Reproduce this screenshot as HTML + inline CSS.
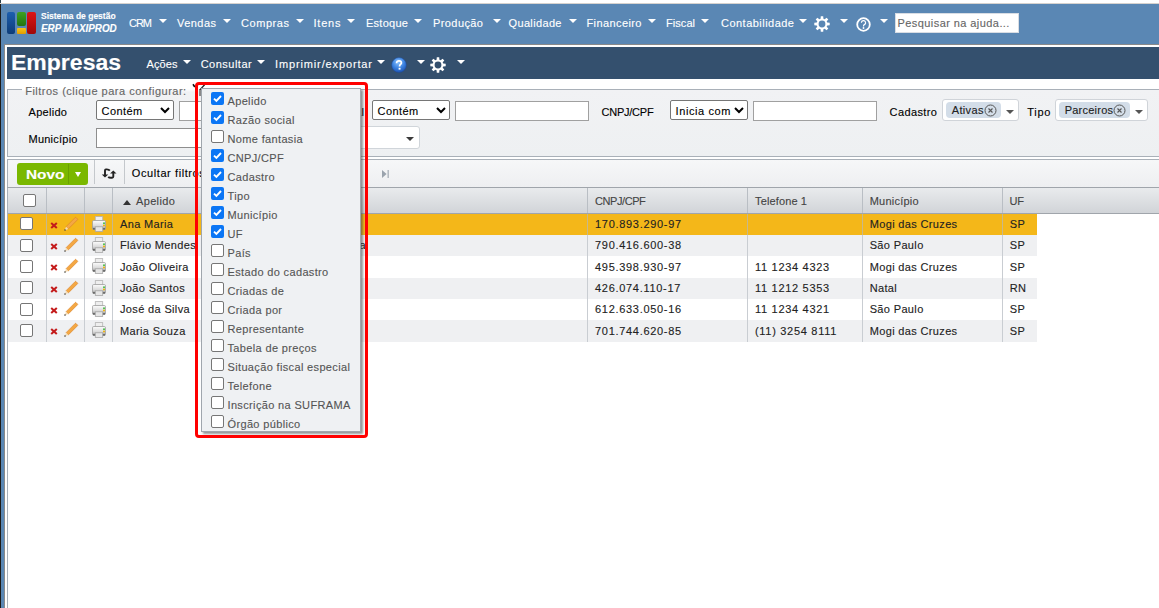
<!DOCTYPE html>
<html><head><meta charset="utf-8"><title>Empresas</title>
<style>
html,body{margin:0;padding:0;width:1159px;height:608px;overflow:hidden;background:#fff;position:relative}
body{font-family:"Liberation Sans",sans-serif;font-size:12px}
.a{position:absolute;display:block}
.t{position:absolute;white-space:nowrap;display:block;-webkit-text-stroke:0.12px currentColor}
.cb{position:absolute;display:block;width:13px;height:13px;box-sizing:border-box;border:1px solid #767676;border-radius:2px;background:#fff}
</style></head><body>
<div class="a" style="left:0px;top:0px;width:1159px;height:4px;background:#fff"></div>
<div class="a" style="left:0px;top:3px;width:1159px;height:1px;background:#d6d2ce"></div>
<div class="a" style="left:0px;top:0px;width:1px;height:3px;background:#2f4550"></div>
<div class="a" style="left:0px;top:4px;width:1px;height:604px;background:#1e1b18"></div>
<div class="a" style="left:1px;top:4px;width:1158px;height:40px;background:#5a87b4"></div>
<div class="a" style="left:1px;top:44px;width:3px;height:564px;background:#5a87b4"></div>
<div class="a" style="left:4px;top:44px;width:1155px;height:564px;background:#fff;border-left:1px solid #8a8a8a;border-top:1px solid #8a8a8a;box-sizing:border-box"></div>
<div class="a" style="left:7px;top:12px;width:8px;height:22px;background:linear-gradient(#1c5eae,#0d3c78);border-radius:2px"></div>
<div class="a" style="left:17px;top:12px;width:9px;height:14px;background:linear-gradient(#3fa020,#237510);border-radius:2px"></div>
<div class="a" style="left:17px;top:28px;width:9px;height:6px;background:linear-gradient(#f6c418,#e09c00);border-radius:1px"></div>
<div class="a" style="left:27px;top:12px;width:9px;height:22px;background:linear-gradient(#dc1414,#a00808);border-radius:2px"></div>
<span class="t" style="left:41px;top:10.55px;font-size:8.5px;line-height:10px;transform:scaleX(0.9990);transform-origin:0 0;color:#fff;font-weight:bold;">Sistema de gestão</span>
<span class="t" style="left:40.5px;top:22.64px;font-size:10px;line-height:12px;transform:scaleX(0.9849);transform-origin:0 0;color:#fff;font-weight:bold;font-style:italic;">ERP MAXIPROD</span>
<span class="t" style="left:129px;top:16.69px;font-size:11px;line-height:13px;letter-spacing:-1.016px;color:#fff;">CRM</span>
<i class="a" style="left:159px;top:19px;width:0;height:0;border-left:4.0px solid transparent;border-right:4.0px solid transparent;border-top:4px solid #fff"></i>
<span class="t" style="left:177px;top:16.69px;font-size:11px;line-height:13px;letter-spacing:0.453px;color:#fff;">Vendas</span>
<i class="a" style="left:223px;top:19px;width:0;height:0;border-left:4.0px solid transparent;border-right:4.0px solid transparent;border-top:4px solid #fff"></i>
<span class="t" style="left:241px;top:16.69px;font-size:11px;line-height:13px;letter-spacing:0.562px;color:#fff;">Compras</span>
<i class="a" style="left:296px;top:19px;width:0;height:0;border-left:4.0px solid transparent;border-right:4.0px solid transparent;border-top:4px solid #fff"></i>
<span class="t" style="left:313.5px;top:16.69px;font-size:11px;line-height:13px;letter-spacing:0.781px;color:#fff;">Itens</span>
<i class="a" style="left:347px;top:19px;width:0;height:0;border-left:4.0px solid transparent;border-right:4.0px solid transparent;border-top:4px solid #fff"></i>
<span class="t" style="left:366px;top:16.69px;font-size:11px;line-height:13px;letter-spacing:0.266px;color:#fff;">Estoque</span>
<i class="a" style="left:414px;top:19px;width:0;height:0;border-left:4.0px solid transparent;border-right:4.0px solid transparent;border-top:4px solid #fff"></i>
<span class="t" style="left:433px;top:16.69px;font-size:11px;line-height:13px;letter-spacing:0.411px;color:#fff;">Produção</span>
<i class="a" style="left:493px;top:19px;width:0;height:0;border-left:4.0px solid transparent;border-right:4.0px solid transparent;border-top:4px solid #fff"></i>
<span class="t" style="left:508.5px;top:16.69px;font-size:11px;line-height:13px;letter-spacing:0.352px;color:#fff;">Qualidade</span>
<i class="a" style="left:569px;top:19px;width:0;height:0;border-left:4.0px solid transparent;border-right:4.0px solid transparent;border-top:4px solid #fff"></i>
<span class="t" style="left:586.5px;top:16.69px;font-size:11px;line-height:13px;letter-spacing:0.403px;color:#fff;">Financeiro</span>
<i class="a" style="left:648px;top:19px;width:0;height:0;border-left:4.0px solid transparent;border-right:4.0px solid transparent;border-top:4px solid #fff"></i>
<span class="t" style="left:666px;top:16.69px;font-size:11px;line-height:13px;letter-spacing:0.056px;color:#fff;">Fiscal</span>
<i class="a" style="left:701px;top:19px;width:0;height:0;border-left:4.0px solid transparent;border-right:4.0px solid transparent;border-top:4px solid #fff"></i>
<span class="t" style="left:721px;top:16.69px;font-size:11px;line-height:13px;letter-spacing:0.474px;color:#fff;">Contabilidade</span>
<i class="a" style="left:799px;top:19px;width:0;height:0;border-left:4.0px solid transparent;border-right:4.0px solid transparent;border-top:4px solid #fff"></i>
<svg class="a" style="left:814px;top:16px" width="16" height="16" viewBox="0 0 16 16"><path fill="#fff" fill-rule="evenodd" d="M13.22 6.60 L15.70 6.78 L15.70 9.22 L13.22 9.40 L12.68 10.70 L14.31 12.58 L12.58 14.31 L10.70 12.68 L9.40 13.22 L9.22 15.70 L6.78 15.70 L6.60 13.22 L5.30 12.68 L3.42 14.31 L1.69 12.58 L3.32 10.70 L2.78 9.40 L0.30 9.22 L0.30 6.78 L2.78 6.60 L3.32 5.30 L1.69 3.42 L3.42 1.69 L5.30 3.32 L6.60 2.78 L6.78 0.30 L9.22 0.30 L9.40 2.78 L10.70 3.32 L12.58 1.69 L14.31 3.42 L12.68 5.30Z M11.40 8 A3.4 3.4 0 1 0 4.60 8 A3.4 3.4 0 1 0 11.40 8Z"/></svg>
<i class="a" style="left:840px;top:19px;width:0;height:0;border-left:4.0px solid transparent;border-right:4.0px solid transparent;border-top:4px solid #fff"></i>
<svg class="a" style="left:856px;top:17px" width="15" height="15" viewBox="0 0 15 15"><circle cx="7.5" cy="7.5" r="6.3" fill="none" stroke="#fff" stroke-width="1.8"/><path d="M5.4 5.7a2.1 2.1 0 1 1 3 1.9c-.6.3-.9.7-.9 1.3v.5" fill="none" stroke="#fff" stroke-width="1.2"/><circle cx="7.5" cy="11" r=".9" fill="#fff"/></svg>
<i class="a" style="left:880px;top:19px;width:0;height:0;border-left:4.0px solid transparent;border-right:4.0px solid transparent;border-top:4px solid #fff"></i>
<div class="a" style="left:895px;top:13px;width:124px;height:20px;background:#fff;border:1px solid #d8dde4;box-sizing:border-box"></div>
<span class="t" style="left:897.5px;top:16.79px;font-size:11px;line-height:13px;letter-spacing:0.428px;color:#666;">Pesquisar na ajuda...</span>
<div class="a" style="left:7px;top:47px;width:1152px;height:32px;background:#34506e"></div>
<span class="t" style="left:11px;top:49.55px;font-size:21.5px;line-height:26px;transform:scaleX(1.0704);transform-origin:0 0;color:#fff;font-weight:bold;">Empresas</span>
<span class="t" style="left:146.5px;top:58.29px;font-size:11px;line-height:13px;letter-spacing:0.102px;color:#fff;">Ações</span>
<i class="a" style="left:183px;top:60px;width:0;height:0;border-left:4.0px solid transparent;border-right:4.0px solid transparent;border-top:4px solid #fff"></i>
<span class="t" style="left:200.7px;top:58.29px;font-size:11px;line-height:13px;letter-spacing:0.488px;color:#fff;">Consultar</span>
<i class="a" style="left:257px;top:60px;width:0;height:0;border-left:4.0px solid transparent;border-right:4.0px solid transparent;border-top:4px solid #fff"></i>
<span class="t" style="left:275px;top:58.29px;font-size:11px;line-height:13px;letter-spacing:0.867px;color:#fff;">Imprimir/exportar</span>
<i class="a" style="left:377px;top:60px;width:0;height:0;border-left:4.0px solid transparent;border-right:4.0px solid transparent;border-top:4px solid #fff"></i>
<svg class="a" style="left:391px;top:57px" width="16" height="16" viewBox="0 0 16 16"><defs><radialGradient id="qg" cx="45%" cy="30%" r="75%"><stop offset="0" stop-color="#8cc4ff"/><stop offset=".55" stop-color="#3b82e0"/><stop offset="1" stop-color="#1b4fae"/></radialGradient></defs><circle cx="8" cy="8" r="7.4" fill="url(#qg)" stroke="#1d4a9a" stroke-width=".5"/><path d="M5.6 6.2C5.6 4.6 6.6 3.8 8 3.8S10.4 4.6 10.4 5.9C10.4 7.3 8.6 7.5 8.6 9V9.6" fill="none" stroke="#fff" stroke-width="1.7"/><rect x="7.6" y="10.8" width="1.9" height="1.8" fill="#fff"/></svg>
<i class="a" style="left:417px;top:60px;width:0;height:0;border-left:4.0px solid transparent;border-right:4.0px solid transparent;border-top:4px solid #fff"></i>
<svg class="a" style="left:430px;top:57px" width="16" height="16" viewBox="0 0 16 16"><path fill="#fff" fill-rule="evenodd" d="M13.22 6.60 L15.70 6.78 L15.70 9.22 L13.22 9.40 L12.68 10.70 L14.31 12.58 L12.58 14.31 L10.70 12.68 L9.40 13.22 L9.22 15.70 L6.78 15.70 L6.60 13.22 L5.30 12.68 L3.42 14.31 L1.69 12.58 L3.32 10.70 L2.78 9.40 L0.30 9.22 L0.30 6.78 L2.78 6.60 L3.32 5.30 L1.69 3.42 L3.42 1.69 L5.30 3.32 L6.60 2.78 L6.78 0.30 L9.22 0.30 L9.40 2.78 L10.70 3.32 L12.58 1.69 L14.31 3.42 L12.68 5.30Z M11.40 8 A3.4 3.4 0 1 0 4.60 8 A3.4 3.4 0 1 0 11.40 8Z"/></svg>
<i class="a" style="left:457px;top:60px;width:0;height:0;border-left:4.0px solid transparent;border-right:4.0px solid transparent;border-top:4px solid #fff"></i>
<div class="a" style="left:7px;top:89px;width:1152px;height:68px;background:linear-gradient(#f1f2f4,#eef0f2);border:1px solid #a9b0b8;border-right:none;box-sizing:border-box"></div>
<div class="a" style="left:22px;top:86px;width:195px;height:6px;background:#fff"></div>
<div class="a" style="left:22px;top:89px;width:195px;height:3px;background:linear-gradient(#fff,#f1f2f4)"></div>
<span class="t" style="left:25.2px;top:85.19px;font-size:11px;line-height:13px;letter-spacing:0.498px;color:#666;">Filtros (clique para configurar:</span>
<svg class="a" style="left:190px;top:82px" width="20" height="16" viewBox="0 0 20 16"><path d="M3 2.2L4.8 5" stroke="#111" stroke-width="1.6"/><path d="M9.4 8.4L14.6 2.8" stroke="#222" stroke-width="1.3"/><rect x="9" y="8" width="2" height="6" fill="#8a8a8a"/></svg>
<span class="t" style="left:28.5px;top:106.39px;font-size:11px;line-height:13px;letter-spacing:0.297px;color:#000;">Apelido</span>
<div class="a" style="left:96px;top:100px;width:78px;height:20px;background:#fff;border:1px solid #767676;border-radius:2px;box-sizing:border-box"></div><span class="t" style="left:101.5px;top:105.39px;font-size:11px;line-height:13px;letter-spacing:0.434px;color:#000;">Contém</span><svg class="a" style="left:160px;top:107px" width="10" height="7" viewBox="0 0 10 7"><path d="M1 1l4 4 4-4" fill="none" stroke="#000" stroke-width="2"/></svg>
<div class="a" style="left:179px;top:101px;width:140px;height:20px;background:#fff;border:1px solid #a0a0a0;box-sizing:border-box"></div>
<span class="t" style="left:297px;top:106.39px;font-size:11px;line-height:13px;letter-spacing:0.364px;color:#000;">Razão social</span>
<div class="a" style="left:372px;top:100px;width:78px;height:20px;background:#fff;border:1px solid #767676;border-radius:2px;box-sizing:border-box"></div><span class="t" style="left:377.5px;top:105.39px;font-size:11px;line-height:13px;letter-spacing:0.434px;color:#000;">Contém</span><svg class="a" style="left:436px;top:107px" width="10" height="7" viewBox="0 0 10 7"><path d="M1 1l4 4 4-4" fill="none" stroke="#000" stroke-width="2"/></svg>
<div class="a" style="left:455px;top:101px;width:134px;height:20px;background:#fff;border:1px solid #a0a0a0;box-sizing:border-box"></div>
<span class="t" style="left:601.6px;top:106.39px;font-size:11px;line-height:13px;letter-spacing:-0.254px;color:#000;">CNPJ/CPF</span>
<div class="a" style="left:670px;top:100px;width:78px;height:20px;background:#fff;border:1px solid #767676;border-radius:2px;box-sizing:border-box"></div><span class="t" style="left:675.5px;top:105.39px;font-size:11px;line-height:13px;letter-spacing:0.608px;color:#000;">Inicia com</span><svg class="a" style="left:734px;top:107px" width="10" height="7" viewBox="0 0 10 7"><path d="M1 1l4 4 4-4" fill="none" stroke="#000" stroke-width="2"/></svg>
<div class="a" style="left:753px;top:101px;width:124px;height:20px;background:#fff;border:1px solid #a0a0a0;box-sizing:border-box"></div>
<span class="t" style="left:889.6px;top:105.89px;font-size:11px;line-height:13px;letter-spacing:0.392px;color:#000;">Cadastro</span>
<div class="a" style="left:942px;top:99px;width:77px;height:22px;background:#fff;border:1px solid #d0d4d9;border-radius:3px;box-sizing:border-box"></div><div class="a" style="left:946px;top:102px;width:55px;height:16px;background:#d3dde8;border-radius:4px"></div><span class="t" style="left:951.7px;top:104.19px;font-size:11px;line-height:13px;letter-spacing:0.366px;color:#222;">Ativas</span><svg class="a" style="left:984px;top:104px" width="13" height="13" viewBox="0 0 13 13"><circle cx="6.5" cy="6.5" r="5.5" fill="none" stroke="#555" stroke-width="1"/><path d="M4.5 4.5l4 4M8.5 4.5l-4 4" stroke="#555" stroke-width="1.1"/></svg><i class="a" style="left:1006px;top:110px;width:0;height:0;border-left:4.0px solid transparent;border-right:4.0px solid transparent;border-top:4px solid #555"></i>
<span class="t" style="left:1027.3px;top:105.89px;font-size:11px;line-height:13px;letter-spacing:0.667px;color:#000;">Tipo</span>
<div class="a" style="left:1055px;top:99px;width:93px;height:22px;background:#fff;border:1px solid #d0d4d9;border-radius:3px;box-sizing:border-box"></div><div class="a" style="left:1059px;top:102px;width:70.5px;height:16px;background:#d3dde8;border-radius:4px"></div><span class="t" style="left:1064.7px;top:104.19px;font-size:11px;line-height:13px;letter-spacing:0.229px;color:#222;">Parceiros</span><svg class="a" style="left:1112.5px;top:104px" width="13" height="13" viewBox="0 0 13 13"><circle cx="6.5" cy="6.5" r="5.5" fill="none" stroke="#555" stroke-width="1"/><path d="M4.5 4.5l4 4M8.5 4.5l-4 4" stroke="#555" stroke-width="1.1"/></svg><i class="a" style="left:1135px;top:110px;width:0;height:0;border-left:4.0px solid transparent;border-right:4.0px solid transparent;border-top:4px solid #555"></i>
<span class="t" style="left:28.5px;top:132.89px;font-size:11px;line-height:13px;letter-spacing:0.238px;color:#000;">Município</span>
<div class="a" style="left:205px;top:126px;width:215px;height:23px;background:#fff;border:1px solid #d0d5da;border-radius:3px;box-sizing:border-box"></div>
<div class="a" style="left:96px;top:128px;width:110px;height:20px;background:#fff;border:1px solid #8e8e8e;box-sizing:border-box"></div>
<i class="a" style="left:406px;top:137px;width:0;height:0;border-left:4.0px solid transparent;border-right:4.0px solid transparent;border-top:4px solid #3a3a3a"></i>
<div class="a" style="left:7px;top:159px;width:1152px;height:29px;background:linear-gradient(#f6f7f8,#eeeff1);border:1px solid #a9b0b8;border-right:none;border-bottom-color:#b8bdc3;box-sizing:border-box"></div>
<div class="a" style="left:17px;top:163px;width:71px;height:22px;background:#7ab800;border-radius:3px"></div>
<div class="a" style="left:68px;top:164px;width:1px;height:20px;background:#6aa000"></div>
<span class="t" style="left:25.5px;top:167.00px;font-size:13px;line-height:16px;transform:scaleX(1.1846);transform-origin:0 0;color:#fff;font-weight:bold;">Novo</span>
<i class="a" style="left:74.5px;top:171.5px;width:0;height:0;border-left:3.5px solid transparent;border-right:3.5px solid transparent;border-top:5px solid #fff"></i>
<div class="a" style="left:94px;top:160px;width:1px;height:24px;background:#c4c8cc"></div>
<svg class="a" style="left:100px;top:167px" width="18" height="13" viewBox="0 0 18 13"><path d="M9.8 3.6C9.2 2.8 8.2 2.4 6.8 2.4H5.9C5.3 2.4 5 2.8 5 3.4V8" fill="none" stroke="#222" stroke-width="1.9"/><path d="M1.8 7.4H8.2L5 10.6z" fill="#222"/><path d="M13.3 6V9.6C13.3 10.4 12.9 10.8 12.1 10.8H10.8C9.6 10.8 8.8 10.5 8.3 9.7" fill="none" stroke="#222" stroke-width="1.9"/><path d="M10.1 6.6H16.5L13.3 3.4z" fill="#222"/></svg>
<div class="a" style="left:124px;top:160px;width:1px;height:24px;background:#c4c8cc"></div>
<span class="t" style="left:131.8px;top:167.49px;font-size:11px;line-height:13px;letter-spacing:0.585px;color:#000;">Ocultar filtros</span>
<svg class="a" style="left:382px;top:170px" width="7" height="8" viewBox="0 0 7 8"><path d="M0 0l4.6 4-4.6 4z" fill="#9aa3ad"/><rect x="5.6" y="0" width="1.1" height="8" fill="#9aa3ad"/></svg>
<div class="a" style="left:7px;top:187px;width:1152px;height:27px;background:linear-gradient(#e9ebed,#d1d4d8);border-top:1px solid #a0a5ab;border-bottom:1px solid #a0a5ab;box-sizing:border-box"></div>
<div class="a" style="left:46px;top:188px;width:1px;height:25px;background:#b9bec4"></div>
<div class="a" style="left:84px;top:188px;width:1px;height:25px;background:#b9bec4"></div>
<div class="a" style="left:112px;top:188px;width:1px;height:25px;background:#b9bec4"></div>
<div class="a" style="left:587px;top:188px;width:1px;height:25px;background:#b9bec4"></div>
<div class="a" style="left:747px;top:188px;width:1px;height:25px;background:#b9bec4"></div>
<div class="a" style="left:862px;top:188px;width:1px;height:25px;background:#b9bec4"></div>
<div class="a" style="left:1002px;top:188px;width:1px;height:25px;background:#b9bec4"></div>
<i class="cb" style="left:23px;top:194px"></i>
<i class="a" style="left:122.5px;top:200px;width:0;height:0;border-left:4.5px solid transparent;border-right:4.5px solid transparent;border-bottom:5px solid #333"></i>
<span class="t" style="left:136px;top:194.69px;font-size:11px;line-height:13px;letter-spacing:0.347px;color:#444;">Apelido</span>
<span class="t" style="left:595px;top:194.69px;font-size:11px;line-height:13px;letter-spacing:-0.426px;color:#444;">CNPJ/CPF</span>
<span class="t" style="left:755px;top:194.69px;font-size:11px;line-height:13px;letter-spacing:0.132px;color:#444;">Telefone 1</span>
<span class="t" style="left:869.7px;top:194.69px;font-size:11px;line-height:13px;letter-spacing:0.238px;color:#444;">Município</span>
<span class="t" style="left:1009.5px;top:194.69px;font-size:11px;line-height:13px;letter-spacing:-0.156px;color:#444;">UF</span>
<div class="a" style="left:7px;top:213.7px;width:1030px;height:21.35px;background:#f4b719"></div>
<div class="a" style="left:46px;top:213.7px;width:1px;height:21.35px;background:#c8b88a"></div>
<div class="a" style="left:84px;top:213.7px;width:1px;height:21.35px;background:#c8b88a"></div>
<div class="a" style="left:112px;top:213.7px;width:1px;height:21.35px;background:#c8b88a"></div>
<div class="a" style="left:587px;top:213.7px;width:1px;height:21.35px;background:#c8b88a"></div>
<div class="a" style="left:747px;top:213.7px;width:1px;height:21.35px;background:#c8b88a"></div>
<div class="a" style="left:862px;top:213.7px;width:1px;height:21.35px;background:#c8b88a"></div>
<div class="a" style="left:1002px;top:213.7px;width:1px;height:21.35px;background:#c8b88a"></div>
<i class="cb" style="left:20px;top:217.2px"></i>
<svg class="a" style="left:50px;top:222px" width="8" height="7" viewBox="0 0 8 7"><path d="M1.2 .9l5.6 5.2M6.8 .9L1.2 6.1" stroke="#c41c1c" stroke-width="2"/></svg>
<svg class="a" style="left:60px;top:215px" width="20" height="20" viewBox="0 0 20 20"><g transform="translate(4.3 15.7) rotate(-45)"><rect x="4" y="-1.6" width="13.6" height="3.2" rx=".5" fill="#f4a843" stroke="#d9822a" stroke-width=".6"/><path d="M.4 0L4.1-1.6V1.6z" fill="#f5dcb4"/><circle cx="1" cy="0" r=".75" fill="#333"/></g></svg>
<svg class="a" style="left:92px;top:215.7px" width="14" height="16" viewBox="0 0 14 16"><defs><linearGradient id="pg0" x1="0" y1="0" x2="0" y2="1"><stop offset="0" stop-color="#fdfdfd"/><stop offset=".6" stop-color="#d9d9d9"/><stop offset="1" stop-color="#8a8a8a"/></linearGradient></defs><rect x="3.3" y="0.6" width="7.4" height="4.4" fill="#eeeeee" stroke="#b4b4b4" stroke-width=".8"/><rect x="0.5" y="4.5" width="13" height="9" rx="1.2" fill="url(#pg0)" stroke="#a0a0a0" stroke-width=".8"/><rect x="1" y="12" width="12" height="1.6" fill="#6a6a6a"/><rect x="3.3" y="10.8" width="7.4" height="4.6" fill="#e6e6e6" stroke="#a8a8a8" stroke-width=".8"/><circle cx="12" cy="7.2" r="1" fill="#44c044"/><circle cx="12" cy="9.6" r="1" fill="#f0b000"/></svg>
<span class="t" style="left:120px;top:218.09px;font-size:11px;line-height:13px;letter-spacing:0.35px;color:#222;">Ana Maria</span>
<span class="t" style="left:595px;top:218.09px;font-size:11px;line-height:13px;letter-spacing:0.7px;color:#222;">170.893.290-97</span>
<span class="t" style="left:869.7px;top:218.09px;font-size:11px;line-height:13px;letter-spacing:0.35px;color:#222;">Mogi das Cruzes</span>
<span class="t" style="left:1009.8px;top:218.09px;font-size:11px;line-height:13px;letter-spacing:0.35px;color:#222;">SP</span>
<div class="a" style="left:7px;top:235.04999999999998px;width:1030px;height:21.35px;background:#eff0f2"></div>
<div class="a" style="left:46px;top:235.04999999999998px;width:1px;height:21.35px;background:#c9cdd2"></div>
<div class="a" style="left:84px;top:235.04999999999998px;width:1px;height:21.35px;background:#c9cdd2"></div>
<div class="a" style="left:112px;top:235.04999999999998px;width:1px;height:21.35px;background:#c9cdd2"></div>
<div class="a" style="left:587px;top:235.04999999999998px;width:1px;height:21.35px;background:#c9cdd2"></div>
<div class="a" style="left:747px;top:235.04999999999998px;width:1px;height:21.35px;background:#c9cdd2"></div>
<div class="a" style="left:862px;top:235.04999999999998px;width:1px;height:21.35px;background:#c9cdd2"></div>
<div class="a" style="left:1002px;top:235.04999999999998px;width:1px;height:21.35px;background:#c9cdd2"></div>
<i class="cb" style="left:20px;top:238.54999999999998px"></i>
<svg class="a" style="left:50px;top:243px" width="8" height="7" viewBox="0 0 8 7"><path d="M1.2 .9l5.6 5.2M6.8 .9L1.2 6.1" stroke="#c41c1c" stroke-width="2"/></svg>
<svg class="a" style="left:60px;top:236px" width="20" height="20" viewBox="0 0 20 20"><g transform="translate(4.3 15.7) rotate(-45)"><rect x="4" y="-1.6" width="13.6" height="3.2" rx=".5" fill="#f4a843" stroke="#d9822a" stroke-width=".6"/><path d="M.4 0L4.1-1.6V1.6z" fill="#f5dcb4"/><circle cx="1" cy="0" r=".75" fill="#333"/></g></svg>
<svg class="a" style="left:92px;top:237.04999999999998px" width="14" height="16" viewBox="0 0 14 16"><defs><linearGradient id="pg1" x1="0" y1="0" x2="0" y2="1"><stop offset="0" stop-color="#fdfdfd"/><stop offset=".6" stop-color="#d9d9d9"/><stop offset="1" stop-color="#8a8a8a"/></linearGradient></defs><rect x="3.3" y="0.6" width="7.4" height="4.4" fill="#eeeeee" stroke="#b4b4b4" stroke-width=".8"/><rect x="0.5" y="4.5" width="13" height="9" rx="1.2" fill="url(#pg1)" stroke="#a0a0a0" stroke-width=".8"/><rect x="1" y="12" width="12" height="1.6" fill="#6a6a6a"/><rect x="3.3" y="10.8" width="7.4" height="4.6" fill="#e6e6e6" stroke="#a8a8a8" stroke-width=".8"/><circle cx="12" cy="7.2" r="1" fill="#44c044"/><circle cx="12" cy="9.6" r="1" fill="#f0b000"/></svg>
<span class="t" style="left:120px;top:239.44px;font-size:11px;line-height:13px;letter-spacing:0.35px;color:#222;">Flávio Mendes</span>
<span class="t" style="left:595px;top:239.44px;font-size:11px;line-height:13px;letter-spacing:0.7px;color:#222;">790.416.600-38</span>
<span class="t" style="left:869.7px;top:239.44px;font-size:11px;line-height:13px;letter-spacing:0.35px;color:#222;">São Paulo</span>
<span class="t" style="left:1009.8px;top:239.44px;font-size:11px;line-height:13px;letter-spacing:0.35px;color:#222;">SP</span>
<div class="a" style="left:7px;top:256.4px;width:1030px;height:21.35px;background:#fff"></div>
<div class="a" style="left:46px;top:256.4px;width:1px;height:21.35px;background:#c9cdd2"></div>
<div class="a" style="left:84px;top:256.4px;width:1px;height:21.35px;background:#c9cdd2"></div>
<div class="a" style="left:112px;top:256.4px;width:1px;height:21.35px;background:#c9cdd2"></div>
<div class="a" style="left:587px;top:256.4px;width:1px;height:21.35px;background:#c9cdd2"></div>
<div class="a" style="left:747px;top:256.4px;width:1px;height:21.35px;background:#c9cdd2"></div>
<div class="a" style="left:862px;top:256.4px;width:1px;height:21.35px;background:#c9cdd2"></div>
<div class="a" style="left:1002px;top:256.4px;width:1px;height:21.35px;background:#c9cdd2"></div>
<i class="cb" style="left:20px;top:259.9px"></i>
<svg class="a" style="left:50px;top:264px" width="8" height="7" viewBox="0 0 8 7"><path d="M1.2 .9l5.6 5.2M6.8 .9L1.2 6.1" stroke="#c41c1c" stroke-width="2"/></svg>
<svg class="a" style="left:60px;top:257px" width="20" height="20" viewBox="0 0 20 20"><g transform="translate(4.3 15.7) rotate(-45)"><rect x="4" y="-1.6" width="13.6" height="3.2" rx=".5" fill="#f4a843" stroke="#d9822a" stroke-width=".6"/><path d="M.4 0L4.1-1.6V1.6z" fill="#f5dcb4"/><circle cx="1" cy="0" r=".75" fill="#333"/></g></svg>
<svg class="a" style="left:92px;top:258.4px" width="14" height="16" viewBox="0 0 14 16"><defs><linearGradient id="pg2" x1="0" y1="0" x2="0" y2="1"><stop offset="0" stop-color="#fdfdfd"/><stop offset=".6" stop-color="#d9d9d9"/><stop offset="1" stop-color="#8a8a8a"/></linearGradient></defs><rect x="3.3" y="0.6" width="7.4" height="4.4" fill="#eeeeee" stroke="#b4b4b4" stroke-width=".8"/><rect x="0.5" y="4.5" width="13" height="9" rx="1.2" fill="url(#pg2)" stroke="#a0a0a0" stroke-width=".8"/><rect x="1" y="12" width="12" height="1.6" fill="#6a6a6a"/><rect x="3.3" y="10.8" width="7.4" height="4.6" fill="#e6e6e6" stroke="#a8a8a8" stroke-width=".8"/><circle cx="12" cy="7.2" r="1" fill="#44c044"/><circle cx="12" cy="9.6" r="1" fill="#f0b000"/></svg>
<span class="t" style="left:120px;top:260.79px;font-size:11px;line-height:13px;letter-spacing:0.35px;color:#222;">João Oliveira</span>
<span class="t" style="left:595px;top:260.79px;font-size:11px;line-height:13px;letter-spacing:0.7px;color:#222;">495.398.930-97</span>
<span class="t" style="left:755px;top:260.79px;font-size:11px;line-height:13px;letter-spacing:0.7px;color:#222;">11 1234 4323</span>
<span class="t" style="left:869.7px;top:260.79px;font-size:11px;line-height:13px;letter-spacing:0.35px;color:#222;">Mogi das Cruzes</span>
<span class="t" style="left:1009.8px;top:260.79px;font-size:11px;line-height:13px;letter-spacing:0.35px;color:#222;">SP</span>
<div class="a" style="left:7px;top:277.75px;width:1030px;height:21.35px;background:#eff0f2"></div>
<div class="a" style="left:46px;top:277.75px;width:1px;height:21.35px;background:#c9cdd2"></div>
<div class="a" style="left:84px;top:277.75px;width:1px;height:21.35px;background:#c9cdd2"></div>
<div class="a" style="left:112px;top:277.75px;width:1px;height:21.35px;background:#c9cdd2"></div>
<div class="a" style="left:587px;top:277.75px;width:1px;height:21.35px;background:#c9cdd2"></div>
<div class="a" style="left:747px;top:277.75px;width:1px;height:21.35px;background:#c9cdd2"></div>
<div class="a" style="left:862px;top:277.75px;width:1px;height:21.35px;background:#c9cdd2"></div>
<div class="a" style="left:1002px;top:277.75px;width:1px;height:21.35px;background:#c9cdd2"></div>
<i class="cb" style="left:20px;top:281.25px"></i>
<svg class="a" style="left:50px;top:286px" width="8" height="7" viewBox="0 0 8 7"><path d="M1.2 .9l5.6 5.2M6.8 .9L1.2 6.1" stroke="#c41c1c" stroke-width="2"/></svg>
<svg class="a" style="left:60px;top:279px" width="20" height="20" viewBox="0 0 20 20"><g transform="translate(4.3 15.7) rotate(-45)"><rect x="4" y="-1.6" width="13.6" height="3.2" rx=".5" fill="#f4a843" stroke="#d9822a" stroke-width=".6"/><path d="M.4 0L4.1-1.6V1.6z" fill="#f5dcb4"/><circle cx="1" cy="0" r=".75" fill="#333"/></g></svg>
<svg class="a" style="left:92px;top:279.75px" width="14" height="16" viewBox="0 0 14 16"><defs><linearGradient id="pg3" x1="0" y1="0" x2="0" y2="1"><stop offset="0" stop-color="#fdfdfd"/><stop offset=".6" stop-color="#d9d9d9"/><stop offset="1" stop-color="#8a8a8a"/></linearGradient></defs><rect x="3.3" y="0.6" width="7.4" height="4.4" fill="#eeeeee" stroke="#b4b4b4" stroke-width=".8"/><rect x="0.5" y="4.5" width="13" height="9" rx="1.2" fill="url(#pg3)" stroke="#a0a0a0" stroke-width=".8"/><rect x="1" y="12" width="12" height="1.6" fill="#6a6a6a"/><rect x="3.3" y="10.8" width="7.4" height="4.6" fill="#e6e6e6" stroke="#a8a8a8" stroke-width=".8"/><circle cx="12" cy="7.2" r="1" fill="#44c044"/><circle cx="12" cy="9.6" r="1" fill="#f0b000"/></svg>
<span class="t" style="left:120px;top:282.14px;font-size:11px;line-height:13px;letter-spacing:0.35px;color:#222;">João Santos</span>
<span class="t" style="left:595px;top:282.14px;font-size:11px;line-height:13px;letter-spacing:0.7px;color:#222;">426.074.110-17</span>
<span class="t" style="left:755px;top:282.14px;font-size:11px;line-height:13px;letter-spacing:0.7px;color:#222;">11 1212 5353</span>
<span class="t" style="left:869.7px;top:282.14px;font-size:11px;line-height:13px;letter-spacing:0.35px;color:#222;">Natal</span>
<span class="t" style="left:1009.8px;top:282.14px;font-size:11px;line-height:13px;letter-spacing:0.35px;color:#222;">RN</span>
<div class="a" style="left:7px;top:299.1px;width:1030px;height:21.35px;background:#fff"></div>
<div class="a" style="left:46px;top:299.1px;width:1px;height:21.35px;background:#c9cdd2"></div>
<div class="a" style="left:84px;top:299.1px;width:1px;height:21.35px;background:#c9cdd2"></div>
<div class="a" style="left:112px;top:299.1px;width:1px;height:21.35px;background:#c9cdd2"></div>
<div class="a" style="left:587px;top:299.1px;width:1px;height:21.35px;background:#c9cdd2"></div>
<div class="a" style="left:747px;top:299.1px;width:1px;height:21.35px;background:#c9cdd2"></div>
<div class="a" style="left:862px;top:299.1px;width:1px;height:21.35px;background:#c9cdd2"></div>
<div class="a" style="left:1002px;top:299.1px;width:1px;height:21.35px;background:#c9cdd2"></div>
<i class="cb" style="left:20px;top:302.6px"></i>
<svg class="a" style="left:50px;top:307px" width="8" height="7" viewBox="0 0 8 7"><path d="M1.2 .9l5.6 5.2M6.8 .9L1.2 6.1" stroke="#c41c1c" stroke-width="2"/></svg>
<svg class="a" style="left:60px;top:300px" width="20" height="20" viewBox="0 0 20 20"><g transform="translate(4.3 15.7) rotate(-45)"><rect x="4" y="-1.6" width="13.6" height="3.2" rx=".5" fill="#f4a843" stroke="#d9822a" stroke-width=".6"/><path d="M.4 0L4.1-1.6V1.6z" fill="#f5dcb4"/><circle cx="1" cy="0" r=".75" fill="#333"/></g></svg>
<svg class="a" style="left:92px;top:301.1px" width="14" height="16" viewBox="0 0 14 16"><defs><linearGradient id="pg4" x1="0" y1="0" x2="0" y2="1"><stop offset="0" stop-color="#fdfdfd"/><stop offset=".6" stop-color="#d9d9d9"/><stop offset="1" stop-color="#8a8a8a"/></linearGradient></defs><rect x="3.3" y="0.6" width="7.4" height="4.4" fill="#eeeeee" stroke="#b4b4b4" stroke-width=".8"/><rect x="0.5" y="4.5" width="13" height="9" rx="1.2" fill="url(#pg4)" stroke="#a0a0a0" stroke-width=".8"/><rect x="1" y="12" width="12" height="1.6" fill="#6a6a6a"/><rect x="3.3" y="10.8" width="7.4" height="4.6" fill="#e6e6e6" stroke="#a8a8a8" stroke-width=".8"/><circle cx="12" cy="7.2" r="1" fill="#44c044"/><circle cx="12" cy="9.6" r="1" fill="#f0b000"/></svg>
<span class="t" style="left:120px;top:303.49px;font-size:11px;line-height:13px;letter-spacing:0.35px;color:#222;">José da Silva</span>
<span class="t" style="left:595px;top:303.49px;font-size:11px;line-height:13px;letter-spacing:0.7px;color:#222;">612.633.050-16</span>
<span class="t" style="left:755px;top:303.49px;font-size:11px;line-height:13px;letter-spacing:0.7px;color:#222;">11 1234 4321</span>
<span class="t" style="left:869.7px;top:303.49px;font-size:11px;line-height:13px;letter-spacing:0.35px;color:#222;">São Paulo</span>
<span class="t" style="left:1009.8px;top:303.49px;font-size:11px;line-height:13px;letter-spacing:0.35px;color:#222;">SP</span>
<div class="a" style="left:7px;top:320.45px;width:1030px;height:21.35px;background:#eff0f2"></div>
<div class="a" style="left:46px;top:320.45px;width:1px;height:21.35px;background:#c9cdd2"></div>
<div class="a" style="left:84px;top:320.45px;width:1px;height:21.35px;background:#c9cdd2"></div>
<div class="a" style="left:112px;top:320.45px;width:1px;height:21.35px;background:#c9cdd2"></div>
<div class="a" style="left:587px;top:320.45px;width:1px;height:21.35px;background:#c9cdd2"></div>
<div class="a" style="left:747px;top:320.45px;width:1px;height:21.35px;background:#c9cdd2"></div>
<div class="a" style="left:862px;top:320.45px;width:1px;height:21.35px;background:#c9cdd2"></div>
<div class="a" style="left:1002px;top:320.45px;width:1px;height:21.35px;background:#c9cdd2"></div>
<i class="cb" style="left:20px;top:323.95px"></i>
<svg class="a" style="left:50px;top:328px" width="8" height="7" viewBox="0 0 8 7"><path d="M1.2 .9l5.6 5.2M6.8 .9L1.2 6.1" stroke="#c41c1c" stroke-width="2"/></svg>
<svg class="a" style="left:60px;top:321px" width="20" height="20" viewBox="0 0 20 20"><g transform="translate(4.3 15.7) rotate(-45)"><rect x="4" y="-1.6" width="13.6" height="3.2" rx=".5" fill="#f4a843" stroke="#d9822a" stroke-width=".6"/><path d="M.4 0L4.1-1.6V1.6z" fill="#f5dcb4"/><circle cx="1" cy="0" r=".75" fill="#333"/></g></svg>
<svg class="a" style="left:92px;top:322.45px" width="14" height="16" viewBox="0 0 14 16"><defs><linearGradient id="pg5" x1="0" y1="0" x2="0" y2="1"><stop offset="0" stop-color="#fdfdfd"/><stop offset=".6" stop-color="#d9d9d9"/><stop offset="1" stop-color="#8a8a8a"/></linearGradient></defs><rect x="3.3" y="0.6" width="7.4" height="4.4" fill="#eeeeee" stroke="#b4b4b4" stroke-width=".8"/><rect x="0.5" y="4.5" width="13" height="9" rx="1.2" fill="url(#pg5)" stroke="#a0a0a0" stroke-width=".8"/><rect x="1" y="12" width="12" height="1.6" fill="#6a6a6a"/><rect x="3.3" y="10.8" width="7.4" height="4.6" fill="#e6e6e6" stroke="#a8a8a8" stroke-width=".8"/><circle cx="12" cy="7.2" r="1" fill="#44c044"/><circle cx="12" cy="9.6" r="1" fill="#f0b000"/></svg>
<span class="t" style="left:120px;top:324.84px;font-size:11px;line-height:13px;letter-spacing:0.35px;color:#222;">Maria Souza</span>
<span class="t" style="left:595px;top:324.84px;font-size:11px;line-height:13px;letter-spacing:0.7px;color:#222;">701.744.620-85</span>
<span class="t" style="left:755px;top:324.84px;font-size:11px;line-height:13px;letter-spacing:0.7px;color:#222;">(11) 3254 8111</span>
<span class="t" style="left:869.7px;top:324.84px;font-size:11px;line-height:13px;letter-spacing:0.35px;color:#222;">Mogi das Cruzes</span>
<span class="t" style="left:1009.8px;top:324.84px;font-size:11px;line-height:13px;letter-spacing:0.35px;color:#222;">SP</span>
<div class="a" style="left:7px;top:188px;width:1px;height:420px;background:#a9b1ba"></div>
<span class="t" style="left:359.5px;top:239.44px;font-size:11px;line-height:13px;letter-spacing:0.35px;color:#222;">a</span>
<div class="a" style="left:201px;top:88px;width:160px;height:344px;background:#eff1f3;border:1px solid #a0a6ad;box-sizing:border-box;box-shadow:2px 2px 2px rgba(60,65,70,.55)"></div>
<svg class="a" style="left:211px;top:92px" width="13" height="13" viewBox="0 0 13 13"><rect width="13" height="13" rx="2" fill="#0b76f5"/><path d="M3 6.6l2.4 2.4 4.6-5" fill="none" stroke="#fff" stroke-width="1.9"/></svg>
<span class="t" style="left:227.5px;top:94.79px;font-size:11px;line-height:13px;letter-spacing:0.35px;color:#555;">Apelido</span>
<svg class="a" style="left:211px;top:111px" width="13" height="13" viewBox="0 0 13 13"><rect width="13" height="13" rx="2" fill="#0b76f5"/><path d="M3 6.6l2.4 2.4 4.6-5" fill="none" stroke="#fff" stroke-width="1.9"/></svg>
<span class="t" style="left:227.5px;top:113.79px;font-size:11px;line-height:13px;letter-spacing:0.35px;color:#555;">Razão social</span>
<i class="cb" style="left:211px;top:130px"></i>
<span class="t" style="left:227.5px;top:132.79px;font-size:11px;line-height:13px;letter-spacing:0.35px;color:#555;">Nome fantasia</span>
<svg class="a" style="left:211px;top:149px" width="13" height="13" viewBox="0 0 13 13"><rect width="13" height="13" rx="2" fill="#0b76f5"/><path d="M3 6.6l2.4 2.4 4.6-5" fill="none" stroke="#fff" stroke-width="1.9"/></svg>
<span class="t" style="left:227.5px;top:151.79px;font-size:11px;line-height:13px;letter-spacing:0.35px;color:#555;">CNPJ/CPF</span>
<svg class="a" style="left:211px;top:168px" width="13" height="13" viewBox="0 0 13 13"><rect width="13" height="13" rx="2" fill="#0b76f5"/><path d="M3 6.6l2.4 2.4 4.6-5" fill="none" stroke="#fff" stroke-width="1.9"/></svg>
<span class="t" style="left:227.5px;top:170.79px;font-size:11px;line-height:13px;letter-spacing:0.35px;color:#555;">Cadastro</span>
<svg class="a" style="left:211px;top:187px" width="13" height="13" viewBox="0 0 13 13"><rect width="13" height="13" rx="2" fill="#0b76f5"/><path d="M3 6.6l2.4 2.4 4.6-5" fill="none" stroke="#fff" stroke-width="1.9"/></svg>
<span class="t" style="left:227.5px;top:189.79px;font-size:11px;line-height:13px;letter-spacing:0.35px;color:#555;">Tipo</span>
<svg class="a" style="left:211px;top:206px" width="13" height="13" viewBox="0 0 13 13"><rect width="13" height="13" rx="2" fill="#0b76f5"/><path d="M3 6.6l2.4 2.4 4.6-5" fill="none" stroke="#fff" stroke-width="1.9"/></svg>
<span class="t" style="left:227.5px;top:208.79px;font-size:11px;line-height:13px;letter-spacing:0.35px;color:#555;">Município</span>
<svg class="a" style="left:211px;top:225px" width="13" height="13" viewBox="0 0 13 13"><rect width="13" height="13" rx="2" fill="#0b76f5"/><path d="M3 6.6l2.4 2.4 4.6-5" fill="none" stroke="#fff" stroke-width="1.9"/></svg>
<span class="t" style="left:227.5px;top:227.79px;font-size:11px;line-height:13px;letter-spacing:0.35px;color:#555;">UF</span>
<i class="cb" style="left:211px;top:244px"></i>
<span class="t" style="left:227.5px;top:246.79px;font-size:11px;line-height:13px;letter-spacing:0.35px;color:#555;">País</span>
<i class="cb" style="left:211px;top:263px"></i>
<span class="t" style="left:227.5px;top:265.79px;font-size:11px;line-height:13px;letter-spacing:0.35px;color:#555;">Estado do cadastro</span>
<i class="cb" style="left:211px;top:282px"></i>
<span class="t" style="left:227.5px;top:284.79px;font-size:11px;line-height:13px;letter-spacing:0.35px;color:#555;">Criadas de</span>
<i class="cb" style="left:211px;top:301px"></i>
<span class="t" style="left:227.5px;top:303.79px;font-size:11px;line-height:13px;letter-spacing:0.35px;color:#555;">Criada por</span>
<i class="cb" style="left:211px;top:320px"></i>
<span class="t" style="left:227.5px;top:322.79px;font-size:11px;line-height:13px;letter-spacing:0.35px;color:#555;">Representante</span>
<i class="cb" style="left:211px;top:339px"></i>
<span class="t" style="left:227.5px;top:341.79px;font-size:11px;line-height:13px;letter-spacing:0.35px;color:#555;">Tabela de preços</span>
<i class="cb" style="left:211px;top:358px"></i>
<span class="t" style="left:227.5px;top:360.79px;font-size:11px;line-height:13px;letter-spacing:0.35px;color:#555;">Situação fiscal especial</span>
<i class="cb" style="left:211px;top:377px"></i>
<span class="t" style="left:227.5px;top:379.79px;font-size:11px;line-height:13px;letter-spacing:0.35px;color:#555;">Telefone</span>
<i class="cb" style="left:211px;top:396px"></i>
<span class="t" style="left:227.5px;top:398.79px;font-size:11px;line-height:13px;letter-spacing:0.35px;color:#555;">Inscrição na SUFRAMA</span>
<i class="cb" style="left:211px;top:415px"></i>
<span class="t" style="left:227.5px;top:417.79px;font-size:11px;line-height:13px;letter-spacing:0.35px;color:#555;">Órgão público</span>
<div class="a" style="left:195px;top:82px;width:173px;height:356px;border:3px solid #f00;border-radius:4px;box-sizing:border-box"></div>
</body></html>
